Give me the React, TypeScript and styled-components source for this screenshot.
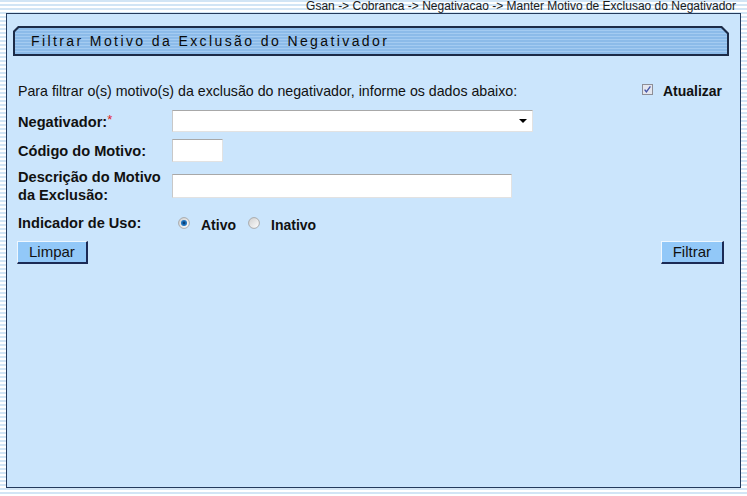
import React from 'react';
import styled, { createGlobalStyle } from 'styled-components';

const GlobalStyle = createGlobalStyle`
  html, body {
    margin: 0;
    padding: 0;
  }
  body {
    width: 747px;
    height: 496px;
    overflow: hidden;
    font-family: "Liberation Sans", Arial, sans-serif;
    background: repeating-linear-gradient(
      to bottom,
      #d2e5f5 0px,
      #d2e5f5 2px,
      #ffffff 2px,
      #ffffff 4px
    );
  }
`;

const Page = styled.div`
  width: 747px;
  height: 496px;
  display: flex;
  flex-direction: column;
`;

const Breadcrumb = styled.div`
  height: 13px;
  line-height: 12px;
  font-size: 12px;
  color: #1a1a1a;
  text-align: right;
  padding-right: 11px;
  white-space: nowrap;
`;

const Panel = styled.div`
  box-sizing: border-box;
  margin-left: 6px;
  width: 735px;
  height: 475px;
  border: 1px solid #243a5c;
  background: #cbe5fc;
  padding: 12px 0 0 6px;
`;

const TitleBar = styled.div`
  box-sizing: border-box;
  width: 716px;
  height: 30px;
  padding: 2px;
  background: #1c2b47;
  clip-path: polygon(5px 0, calc(100% - 7px) 0, 100% 7px, 100% 100%, 0 100%, 0 5px);
`;

const TitleFill = styled.div`
  box-sizing: border-box;
  height: 100%;
  display: flex;
  align-items: center;
  padding-left: 16px;
  font-size: 14px;
  letter-spacing: 2.4px;
  color: #0a0a0a;
  background: repeating-linear-gradient(
    to bottom,
    #8cbbe9 0px,
    #8cbbe9 2px,
    #a4cbf1 2px,
    #a4cbf1 3px
  );
  clip-path: polygon(4px 0, calc(100% - 6px) 0, 100% 6px, 100% 100%, 0 100%, 0 4px);
`;

const Form = styled.div`
  width: 708px;
  margin-left: 4px;
  display: flex;
  flex-direction: column;
`;

const IntroRow = styled.div`
  margin-top: 25px;
  height: 20px;
  display: flex;
  align-items: center;
  justify-content: space-between;
  padding-right: 3px;
`;

const IntroText = styled.span`
  padding-left: 1px;
  font-size: 14.2px;
  color: #111;
  white-space: nowrap;
`;

const CheckGroup = styled.label`
  display: flex;
  align-items: center;
  gap: 10px;
  font-size: 14px;
  font-weight: bold;
  color: #111;

  svg {
    margin-top: -4px;
  }
`;

const FieldRow = styled.div<{ $top: number; $h: number }>`
  margin-top: ${(p) => p.$top}px;
  height: ${(p) => p.$h}px;
  display: grid;
  grid-template-columns: 155px 1fr;
  align-items: center;
`;

const Label = styled.div`
  padding-left: 1px;
  font-size: 14.6px;
  font-weight: bold;
  line-height: 18px;
  color: #111;
  white-space: nowrap;
`;

const Required = styled.span`
  color: #e0201e;
  font-weight: normal;
  font-size: 13px;
  vertical-align: 3px;
`;

const TextBox = styled.div<{ $w: number; $h: number }>`
  box-sizing: border-box;
  width: ${(p) => p.$w}px;
  height: ${(p) => p.$h}px;
  background: #ffffff;
  border-top: 1px solid #a8a8a8;
  border-left: 1px solid #c8c8c8;
  border-right: 1px solid #e2e2e2;
  border-bottom: 1px solid #e2e2e2;
`;

const SelectBox = styled(TextBox)`
  display: flex;
  align-items: center;
  justify-content: flex-end;
  padding-right: 5px;
`;

const Arrow = styled.span`
  width: 0;
  height: 0;
  border-left: 4px solid transparent;
  border-right: 4px solid transparent;
  border-top: 4px solid #000;
`;

const RadioGroup = styled.div`
  display: flex;
  align-items: center;
  padding-left: 6px;
  padding-top: 5px;
  font-size: 14px;
  font-weight: bold;
  color: #111;
`;

const RadioItem = styled.label`
  display: flex;
  align-items: center;
  gap: 11px;
  margin-right: 12px;

  svg {
    margin-top: -5px;
  }
`;

const ButtonRow = styled.div`
  margin-top: 9px;
  display: flex;
  justify-content: space-between;
  padding-right: 1px;
`;

const Button = styled.button`
  box-sizing: border-box;
  height: 23px;
  padding: 0 11px 0 11px;
  font-family: "Liberation Sans", Arial, sans-serif;
  font-size: 15px;
  color: #111;
  background: #92c8f8;
  border-top: 1px solid #eef7ff;
  border-left: 1px solid #eef7ff;
  border-right: 2px solid #1b2a55;
  border-bottom: 2px solid #1b2a55;
  line-height: 18px;
`;

const CheckIcon = () => (
  <svg width="11" height="11" viewBox="0 0 11 11">
    <rect x="0.5" y="0.5" width="10" height="10" fill="#e4e6ee" stroke="#8e8e96" />
    <path d="M2.6 5.6 L4.4 7.8 L8.4 2.4" fill="none" stroke="#4656a8" strokeWidth="1.4" />
  </svg>
);

const RadioIcon: React.FC<{ checked?: boolean }> = ({ checked }) => (
  <svg width="12" height="12" viewBox="0 0 12 12">
    <defs>
      <linearGradient id="rg" x1="0" y1="0" x2="1" y2="1">
        <stop offset="0" stopColor="#cfcfcf" />
        <stop offset="1" stopColor="#ffffff" />
      </linearGradient>
    </defs>
    <circle cx="6" cy="6" r="5.4" fill="url(#rg)" stroke="#a4a4a4" strokeWidth="0.9" />
    {checked && (
      <>
        <circle cx="6" cy="6" r="3" fill="#1d74c0" />
        <circle cx="6" cy="6" r="1.4" fill="#0d3f72" />
      </>
    )}
  </svg>
);

export default function App() {
  return (
    <Page>
      <GlobalStyle />
      <Breadcrumb>
        Gsan -&gt; Cobranca -&gt; Negativacao -&gt; Manter Motivo de Exclusao do Negativador
      </Breadcrumb>
      <Panel>
        <TitleBar>
          <TitleFill>Filtrar Motivo da Exclusão do Negativador</TitleFill>
        </TitleBar>
        <Form>
          <IntroRow>
            <IntroText>
              Para filtrar o(s) motivo(s) da exclusão do negativador, informe os dados abaixo:
            </IntroText>
            <CheckGroup>
              <CheckIcon />
              Atualizar
            </CheckGroup>
          </IntroRow>

          <FieldRow $top={8} $h={24}>
            <Label>
              Negativador:<Required>*</Required>
            </Label>
            <SelectBox $w={361} $h={22}>
              <Arrow />
            </SelectBox>
          </FieldRow>

          <FieldRow $top={5} $h={25}>
            <Label>Código do Motivo:</Label>
            <TextBox $w={51} $h={23} />
          </FieldRow>

          <FieldRow $top={5} $h={36}>
            <Label>
              Descrição do Motivo
              <br />
              da Exclusão:
            </Label>
            <TextBox $w={340} $h={24} />
          </FieldRow>

          <FieldRow $top={8} $h={20}>
            <Label>Indicador de Uso:</Label>
            <RadioGroup>
              <RadioItem>
                <RadioIcon checked />
                Ativo
              </RadioItem>
              <RadioItem>
                <RadioIcon />
                Inativo
              </RadioItem>
            </RadioGroup>
          </FieldRow>

          <ButtonRow>
            <Button>Limpar</Button>
            <Button>Filtrar</Button>
          </ButtonRow>
        </Form>
      </Panel>
    </Page>
  );
}
